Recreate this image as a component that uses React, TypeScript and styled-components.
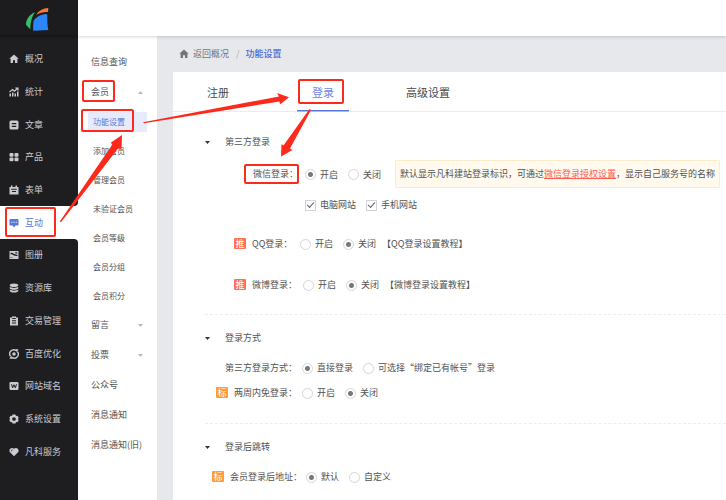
import React from "react";
import styled, { createGlobalStyle } from "styled-components";

const GlobalStyle = createGlobalStyle`
  * { box-sizing: border-box; }
  body {
    margin: 0;
    font: 9px/12px "Noto Sans CJK SC", sans-serif;
    color: #525252;
    background: #e7e8ec;
  }
  ul { list-style: none; margin: 0; padding: 0; }
  a { color: inherit; text-decoration: none; }
  button { font: inherit; color: inherit; background: none; border: 0; padding: 0; cursor: pointer; }
`;

const Page = styled.div`
  position: relative;
  display: grid;
  grid-template-columns: 78px 1fr;
  min-height: 100vh;
  overflow: hidden;
`;

const Sidebar = styled.aside`
  display: flex;
  flex-direction: column;
  background: #fff;
`;

const Brand = styled.div`
  height: 43px;
  padding: 7px 0 0 25px;
  background: linear-gradient(#1c1c1e 34px, #161618 36px, #1e1e20 39px);
  svg { display: block; }
`;

const MainNav = styled.ul`
  flex: 1;
  display: grid;
  grid-auto-rows: 1fr;
`;

const SidebarFoot = styled.div`
  height: 32px;
  background: #1e1e20;
`;

const NavItem = styled.li<{ $active?: boolean; $before?: boolean; $after?: boolean }>`
  background: ${(p) => (p.$active ? "#fff" : "#1e1e20")};
  color: ${(p) => (p.$active ? "#5b76d9" : "#c9cad2")};
  border-radius: 0 ${(p) => (p.$after ? "4px" : "0")} ${(p) => (p.$before ? "4px" : "0")} 0;
  a {
    display: flex;
    align-items: center;
    gap: 6px;
    height: 100%;
    padding-left: 9px;
    white-space: nowrap;
  }
`;

const Body = styled.div`
  display: flex;
  flex-direction: column;
  min-width: 0;
`;

const Header = styled.header`
  height: 36px;
  background: #fff;
  box-shadow: 0 1px 3px rgba(0, 0, 0, 0.16);
  z-index: 1;
`;

const Columns = styled.div`
  flex: 1;
  display: grid;
  grid-template-columns: 79px 1fr;
`;

const SubNav = styled.nav`
  padding-top: 11px;
  background: #fff;
`;

const SubItem = styled.li`
  > a {
    display: flex;
    align-items: center;
    justify-content: space-between;
    height: 30px;
    padding: 0 14px 0 13px;
    white-space: nowrap;
  }
`;

const Caret = styled.svg<{ $up?: boolean }>`
  width: 5px;
  height: 3px;
  fill: #b4b7c0;
  transform: ${(p) => (p.$up ? "rotate(180deg)" : "none")};
`;

const ChildItem = styled.li<{ $active?: boolean }>`
  display: flex;
  align-items: center;
  height: 29px;
  padding: 0 10px;
  font-size: 8px;
  a {
    flex: 1;
    height: 20px;
    line-height: 20px;
    padding-left: 5px;
    border-radius: 1px;
    color: ${(p) => (p.$active ? "#5b76d9" : "inherit")};
    background: ${(p) => (p.$active ? "#e6ebfd" : "none")};
  }
`;

const Main = styled.main`
  display: flex;
  flex-direction: column;
  min-width: 0;
  padding-left: 16px;
`;

const Breadcrumb = styled.nav`
  display: flex;
  align-items: center;
  height: 36px;
  padding-left: 6px;
  gap: 4px;
  color: #70757d;
`;

const Slash = styled.span`
  padding: 0 2px 0 3px;
  color: #a9adb5;
`;

const Here = styled.span`
  color: #4a67d6;
  font-weight: 500;
`;

const Panel = styled.section`
  flex: 1;
  background: #fff;
`;

const Tabs = styled.div`
  display: flex;
  gap: 53px;
  height: 40px;
  padding-left: 19px;
  border-bottom: 1px solid #ececef;
`;

const Tab = styled.button<{ $active?: boolean }>`
  display: flex;
  justify-content: center;
  align-items: center;
  width: 52px;
  height: 39px;
  font-size: 11px;
  white-space: nowrap;
  color: ${(p) => (p.$active ? "#6c86e2" : "#484848")};
  box-shadow: ${(p) => (p.$active ? "0 1px #a6b6ee, inset 0 -1px #5b78de" : "none")};
`;

const Group = styled.section<{ $first?: boolean; $end: number }>`
  margin-left: 32px;
  padding-top: ${(p) => (p.$first ? 18 : 11)}px;
  padding-bottom: ${(p) => p.$end}px;
  & + & { border-top: 1px dashed #ededed; }
`;

const GroupTitle = styled.button`
  display: flex;
  align-items: center;
  gap: 15px;
  height: 24px;
  svg { fill: #333; }
`;

const Row = styled.div<{ $height: number; $indent: number; $label?: number; $top?: number }>`
  display: flex;
  align-items: center;
  height: ${(p) => p.$height}px;
  margin-top: ${(p) => p.$top || 0}px;
  padding-left: ${(p) => p.$indent}px;
  gap: 10px;
  white-space: nowrap;
  > :first-child { ${(p) => (p.$label ? `width: ${p.$label}px; margin-right: -10px;` : "")} }
`;

const RowLabel = styled.span`
  flex: none;
  display: flex;
  align-items: center;
  gap: 6px;
`;

const Badge = styled.span<{ $color: string }>`
  width: 12px;
  height: 11px;
  line-height: 11px;
  border-radius: 1px;
  text-align: center;
  color: #fff;
  background: ${(p) => p.$color};
`;

const Choice = styled.label`
  flex: none;
  display: flex;
  align-items: center;
  gap: 4px;
  padding-top: 1px;
`;

const Radio = styled.input`
  appearance: none;
  width: 11px;
  height: 11px;
  margin: 0;
  border: 1px solid #d6d6da;
  border-radius: 50%;
  background: #fff;
  &:checked { background: radial-gradient(circle, #77777c 0 2px, #fff 3px); }
`;

const Check = styled.input`
  appearance: none;
  display: grid;
  place-items: center;
  width: 11px;
  height: 11px;
  margin: 0;
  border: 1px solid #d0d3d9;
  &:checked::after {
    content: "";
    width: 6px;
    height: 3px;
    margin-bottom: 2px;
    border: solid #5d646e;
    border-width: 0 0 1px 1px;
    transform: rotate(-48deg);
  }
`;

const Checks = styled.div`
  display: flex;
  gap: 10px;
`;

const Tutorial = styled.a`
  margin-left: -4px;
`;

const Tip = styled.p`
  flex: none;
  margin: 0 0 0 4px;
  padding: 7px 4px;
  border: 1px solid #fbeccb;
  border-radius: 1px;
  background: #fffaed;
  a { color: #ff5a52; text-decoration: underline; }
`;

const Marks = styled.svg`
  position: absolute;
  top: 0;
  left: 0;
  pointer-events: none;
`;

const icons: Record<string, React.ReactNode> = {
  home: <path d="M10 1 L0.6 9.6 H3.2 V18 H8 V12.5 H12 V18 H16.8 V9.6 H19.4 Z" />,
  stats: (
    <>
      <path d="M1 13h3v6H1zM6 11h3v8H6zM11 13h3v6h-3zM16 9h3v10h-3z" />
      <path d="M1 10 L7 5 L11 8.5 L17 2.5 M12.5 2h5.5v5.5" fill="none" stroke="currentColor" strokeWidth="2.2" />
    </>
  ),
  article: <path fillRule="evenodd" d="M4 1h12a3 3 0 0 1 3 3v12a3 3 0 0 1-3 3H4a3 3 0 0 1-3-3V4a3 3 0 0 1 3-3zM5.500 6v2.400h9V6zM5.500 11.500v2.400h9v-2.400z" />,
  product: (
    <>
      <rect x="1" y="2" width="8" height="7.500" rx="2" />
      <rect x="11" y="2" width="8" height="7.500" rx="2" />
      <rect x="1" y="11" width="8" height="7.500" rx="2" />
      <rect x="11" y="11" width="8" height="7.500" rx="2" />
    </>
  ),
  form: <path fillRule="evenodd" d="M1 4h3V1h3v3h6V1h3v3h3v15H1zM4.500 7.500v2h11v-2zM6 12v2h8v-2z" />,
  chat: <path fillRule="evenodd" d="M3 2h14a2 2 0 0 1 2 2v9a2 2 0 0 1-2 2h-4l-3 4-3-4H3a2 2 0 0 1-2-2V4a2 2 0 0 1 2-2zM4.500 7.500v2.200h2.200V7.500zM9 7.500v2.200h2.200V7.500zM13.500 7.500v2.200h2.200V7.500z" />,
  album: <path fillRule="evenodd" d="M1 2h18v16H1zM3 6.500c5-3 6 4 14 3V12C9 13 7 6.500 3 9zM12.500 4.500v2.500h4V4.500zM3 14.500v1.500h6z" />,
  data: (
    <>
      <ellipse cx="10" cy="4.500" rx="8.500" ry="3.500" />
      <path d="M1.500 7.500c3 3 14 3 17 0v3.500c-3 3.500-14 3.500-17 0zM1.500 13c3 3 14 3 17 0v3c-3 4-14 4-17 0z" />
    </>
  ),
  trade: <path fillRule="evenodd" d="M2 3h4V1h8v2h4v16H2zM6.500 4v2h7V4zM6 8.500v2h8v-2zM6 13v2h8v-2z" />,
  optimize: (
    <>
      <path d="M3 14.500 A8 8 0 0 1 14 3.200 M17 5.500 A8 8 0 0 1 6 16.800" fill="none" stroke="currentColor" strokeWidth="2.800" />
      <path d="M13 0l6 1-3.500 6zM7 20l-6-1 3.500-6z" />
      <circle cx="10" cy="10" r="3.500" />
    </>
  ),
  domain: (
    <>
      <rect x="1" y="2" width="18" height="16" rx="2.500" />
      <path d="M5 6.500l2.300 7L10 7.500l2.700 6 2.300-7" fill="none" stroke="#1e1e20" strokeWidth="2" />
    </>
  ),
  gear: <path fillRule="evenodd" d="M7 1h6l1 2.800 3-.3 2.500 4.500L17.500 10l2 2-2.500 4.500-3-.3L13 19H7l-1-2.800-3 .3L.5 12l2-2-2-2L3 3.500l3 .3zM10 6.300a3.700 3.700 0 1 0 0 7.400 3.700 3.700 0 0 0 0-7.400z" />,
  heart: (
    <>
      <path d="M10 18.500L1.500 10C-1 5 4 .5 8 2.500l2 1.200 2-1.200c4-2 9 2.500 6.500 7.500z" />
      <path d="M4.500 8.500c0-1.800 1-2.800 2.800-2.800" fill="none" stroke="#1e1e20" strokeWidth="1.600" />
    </>
  ),
};

const Icon = ({ name }: { name: string }) => (
  <svg width="10" height="10" viewBox="0 0 20 20" fill="currentColor" aria-hidden="true">
    {icons[name]}
  </svg>
);

const Arrow = ({ up }: { up?: boolean }) => (
  <Caret $up={up} viewBox="0 0 5 3" aria-hidden="true">
    <path d="M0 0h5L2.500 3z" />
  </Caret>
);

const mainItems = [
  ["home", "概况"], ["stats", "统计"], ["article", "文章"], ["product", "产品"], ["form", "表单"],
  ["chat", "互动"], ["album", "图册"], ["data", "资源库"], ["trade", "交易管理"], ["optimize", "百度优化"],
  ["domain", "网站域名"], ["gear", "系统设置"], ["heart", "凡科服务"],
];
const activeMain = 5;

const memberItems = ["功能设置", "添加会员", "管理会员", "未验证会员", "会员等级", "会员分组", "会员积分"];

const RadioPair = ({ name, options, selected }: { name: string; options: string[]; selected: number }) => (
  <>
    {options.map((text, i) => (
      <Choice key={text}>
        <Radio type="radio" name={name} defaultChecked={i === selected} />
        {text}
      </Choice>
    ))}
  </>
);

const Recommended = () => <Badge $color="#ff6f55">推</Badge>;
const Standard = () => <Badge $color="#ff9c38">标</Badge>;

export default function App() {
  return (
    <Page lang="zh-CN">
      <GlobalStyle />
      <Sidebar>
        <Brand>
          <svg width="25" height="25" viewBox="75 21 75 75" role="img" aria-label="凡科">
            <path d="M105 37C90 42 78 58 78 74c4 4 8 9 13 14 0-18 3-36 14-51z" fill="#32c26b" />
            <path d="M109 44c6-12 20-19 36-20l-1 12c-12-1-23 2-35 8z" fill="#fb7534" />
            <path d="M101 62c8-11 22-19 36-20 6 0 5 4 5 10 0 14 0 26 3 38l-45 2c-1-10-1-20 1-30z" fill="#2a86fa" />
          </svg>
        </Brand>
        <MainNav>
          {mainItems.map(([icon, text], i) => (
            <NavItem key={text} $active={i === activeMain} $before={i === activeMain - 1} $after={i === activeMain + 1}>
              <a href="#"><Icon name={icon} />{text}</a>
            </NavItem>
          ))}
        </MainNav>
        <SidebarFoot />
      </Sidebar>
      <Body>
        <Header />
        <Columns>
          <SubNav>
            <ul>
              <SubItem><a href="#">信息查询</a></SubItem>
              <SubItem>
                <a href="#">会员<Arrow up /></a>
                <ul>
                  {memberItems.map((text, i) => (
                    <ChildItem key={text} $active={i === 0}><a href="#">{text}</a></ChildItem>
                  ))}
                </ul>
              </SubItem>
              <SubItem><a href="#">留言<Arrow /></a></SubItem>
              <SubItem><a href="#">投票<Arrow /></a></SubItem>
              <SubItem><a href="#">公众号</a></SubItem>
              <SubItem><a href="#">消息通知</a></SubItem>
              <SubItem><a href="#">消息通知(旧)</a></SubItem>
            </ul>
          </SubNav>
          <Main>
            <Breadcrumb>
              <Icon name="home" />
              <a href="#">返回概况</a>
              <Slash>/</Slash>
              <Here>功能设置</Here>
            </Breadcrumb>
            <Panel>
              <Tabs role="tablist">
                <Tab role="tab">注册</Tab>
                <Tab role="tab" aria-selected="true" $active>登录</Tab>
                <Tab role="tab">高级设置</Tab>
              </Tabs>
              <Group $first $end={9}>
                <GroupTitle><Arrow />第三方登录</GroupTitle>
                <Row $height={40} $indent={48} $label={52}>
                  <RowLabel>微信登录：</RowLabel>
                  <RadioPair name="wechat" options={["开启", "关闭"]} selected={0} />
                  <Tip>默认显示凡科建站登录标识，可通过<a href="#">微信登录授权设置</a>，显示自己服务号的名称</Tip>
                </Row>
                <Row $height={21} $indent={100}>
                  <Checks>
                    <Choice><Check type="checkbox" defaultChecked />电脑网站</Choice>
                    <Choice><Check type="checkbox" defaultChecked />手机网站</Choice>
                  </Checks>
                </Row>
                <Row $height={41} $indent={29} $label={66} $top={8}>
                  <RowLabel><Recommended />QQ登录：</RowLabel>
                  <RadioPair name="qq" options={["开启", "关闭"]} selected={1} />
                  <Tutorial href="#">【QQ登录设置教程】</Tutorial>
                </Row>
                <Row $height={41} $indent={29} $label={69}>
                  <RowLabel><Recommended />微博登录：</RowLabel>
                  <RadioPair name="weibo" options={["开启", "关闭"]} selected={1} />
                  <Tutorial href="#">【微博登录设置教程】</Tutorial>
                </Row>
              </Group>
              <Group $end={18}>
                <GroupTitle><Arrow />登录方式</GroupTitle>
                <Row $height={25} $indent={20} $label={77} $top={5}>
                  <RowLabel>第三方登录方式：</RowLabel>
                  <RadioPair name="method" options={["直接登录", "可选择“绑定已有帐号”登录"]} selected={0} />
                </Row>
                <Row $height={25} $indent={11} $label={86}>
                  <RowLabel><Standard />两周内免登录：</RowLabel>
                  <RadioPair name="remember" options={["开启", "关闭"]} selected={1} />
                </Row>
              </Group>
              <Group $end={11}>
                <GroupTitle><Arrow />登录后跳转</GroupTitle>
                <Row $height={25} $indent={7} $label={94} $top={5}>
                  <RowLabel><Standard />会员登录后地址：</RowLabel>
                  <RadioPair name="redirect" options={["默认", "自定义"]} selected={0} />
                </Row>
              </Group>
            </Panel>
          </Main>
        </Columns>
      </Body>
      <Marks width="726" height="500" viewBox="0 0 726 500" aria-hidden="true">
        <g fill="none" stroke="#fd2a1c" strokeWidth="2">
          <rect x="83" y="81" width="31" height="20" rx="1" />
          <rect x="82" y="110" width="51" height="21" rx="1" />
          <rect x="6" y="208" width="49" height="28" rx="1" />
          <rect x="299" y="80" width="44" height="23" rx="1" />
          <rect x="245" y="165" width="53" height="18" rx="1" />
        </g>
        <g fill="#fd2a1c">
          <path d="M59.800 221.500 L112 145 L111 142.500 L122 135 L121.500 149 L118 148.500 L61 222.300 Z" />
          <path d="M143 122.300 L279 96.500 L277 93 L289 97.300 L280 104.500 L279.500 101.500 L144 123.200 Z" />
          <path d="M309.500 109 L283.500 145.500 L281.500 144 L281 156.500 L292.500 150 L290 148.500 L311 110 Z" />
        </g>
      </Marks>
    </Page>
  );
}
